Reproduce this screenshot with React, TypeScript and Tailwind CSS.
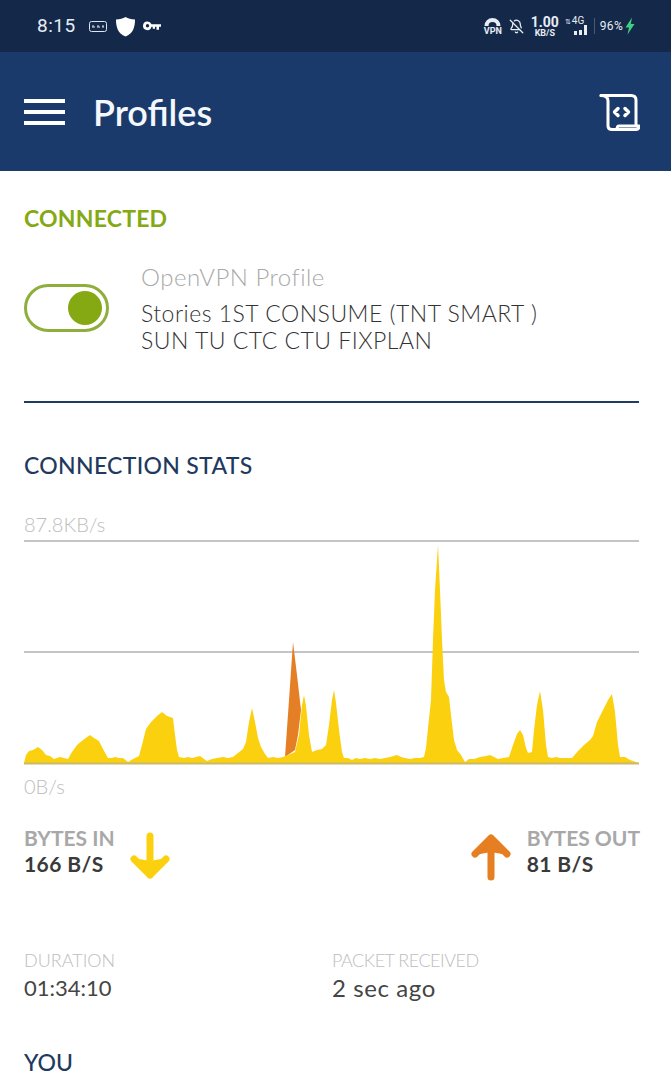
import React from 'react';
import { BellOff } from 'lucide-react';

const yellow =
  '24,763 26,755 29,751 33,750 38,747 42,750 46,755 50,756 54,759 57,758 60,757 64,758 68,759 72,752 77,745 83,740 90,735 94,738 99,741 103,749 108,758 112,758 115,757 119,758 123,758 128,762 133,759 139,756 142,745 146,729 151,722 157,716 162,712 167,716 173,718 175,735 177,750 179,757 184,758 188,757 192,758 196,757 200,756 204,759 207,761 212,759 217,758 223,757 228,758 233,757 238,753 243,749 246,742 249,722 252,708 255,722 258,738 261,747 265,754 268,758 273,757 278,758 283,757 288,755 295,752 299,735 302,705 304,695 306,706 309,735 312,752 317,750 322,749 326,745 329,725 332,700 334,690 336,703 339,730 342,752 344,758 348,758 352,760 356,758 360,759 365,758 370,759 375,758 380,759 385,758 390,757 397,755 401,757 405,758 410,759 415,758 420,758 424,757 426,748 428,728 431,700 433,640 435,590 438,545 440,590 442,640 444,680 446,692 449,697 451,715 454,740 457,750 461,755 465,762 469,759 474,759 480,757 486,756 490,755 494,757 498,759 503,758 509,757 513,745 517,734 520,730 523,735 526,748 528,753 532,752 534,730 537,705 540,691 543,710 546,745 548,757 552,758 556,757 560,758 566,758 572,758 578,751 584,745 590,740 593,736 597,722 603,710 608,700 612,694 615,712 618,745 620,757 625,757 630,760 639,763';

function StatusBar() {
  return (
    <div className="h-[52px] bg-[#14294a] flex items-center justify-between pl-[37px] pr-[36px] text-[#e8edf4]">
      <div className="flex items-center">
        <span className="text-[19px] tracking-[0.5px] font-['Roboto',sans-serif]">8:15</span>
        <svg className="ml-[13px]" width="18" height="11" viewBox="0 0 18 11" fill="none" stroke="#dfe5ee" strokeWidth="1">
          <rect x="0.5" y="0.5" width="17" height="10" rx="2" />
          <path d="M3 6h3M8 6h3M13 6h2M4 4v2M9 4v2M14 4v2" />
        </svg>
        <svg className="ml-[8px]" width="21" height="21" viewBox="0 0 21 21" fill="#fff">
          <path d="M10.5 1C13 2.6 16 3.4 20 3.4c0 8-2 14-9.5 17C3 17.400 1 11.400 1 3.400 5 3.400 8 2.600 10.500 1z" />
        </svg>
        <svg className="ml-[7px]" width="18" height="10" viewBox="0 0 18 10" fill="#fff">
          <path d="M4.500 0.500a4.300 4.300 0 0 1 4 2.700H18v2.600h-2v3h-2.500v-3H12v2H9.700V5.800H8.500a4.300 4.300 0 1 1-4-5.300zm0 2.600a1.700 1.700 0 1 0 0 3.400 1.700 1.700 0 0 0 0-3.400z" fillRule="evenodd" />
        </svg>
      </div>
      <div className="flex items-center font-['Roboto',sans-serif]">
        <div className="flex flex-col items-center w-[18px]">
          <svg width="17" height="9" viewBox="0 0 17 9" fill="#e8edf4">
            <path d="M0.500 9a8 8 0 0 1 16 0h-4a4 4 0 0 0-8 0z" />
          </svg>
          <span className="text-[9px] leading-[9px] font-bold mt-[1px]">VPN</span>
        </div>
        <BellOff className="ml-[7px]" size={15} color="#e8edf4" strokeWidth={2} />
        <div className="ml-[8px] flex flex-col items-center w-[26px]">
          <span className="text-[14px] leading-[14px] font-bold">1.00</span>
          <span className="text-[9px] leading-[9px] font-bold">KB/S</span>
        </div>
        <div className="ml-[7px] relative w-[26px] h-[20px]">
          <span className="absolute left-0 top-0 text-[7px] leading-[12px]">⇅</span>
          <span className="absolute left-[7px] top-0 text-[10px] leading-[10px]">4G</span>
          <div className="absolute left-[9px] bottom-[1px] flex items-end gap-[2px]">
            <div className="w-[3px] h-[4px] bg-[#e8edf4]" />
            <div className="w-[3px] h-[5px] bg-[#e8edf4]" />
            <div className="w-[3px] h-[10px] bg-[#e8edf4]" />
          </div>
        </div>
        <div className="ml-[3px] w-px h-[16px] bg-[#4a5a73]" />
        <span className="ml-[5px] text-[12px] tracking-[0.3px]">96%</span>
        <svg className="ml-[2px]" width="10" height="18" viewBox="0 0 10 17" fill="#3fd07f">
          <path d="M7 0L0.500 10H4L2.500 17 9.500 6.500H5.800z" />
        </svg>
      </div>
    </div>
  );
}

function Header() {
  return (
    <div className="h-[119px] bg-[#1a3a6c] flex items-center pl-[24px] pr-[31px]">
      <div className="w-[41px] flex flex-col gap-[7px]">
        <div className="h-[4px] bg-white" />
        <div className="h-[4px] bg-white" />
        <div className="h-[4px] bg-white" />
      </div>
      <h1 className="ml-[28px] text-[36px] font-semibold text-[#f4f7fb]">Profiles</h1>
      <svg className="ml-auto" width="41" height="40" viewBox="0 0 41 40" fill="none" stroke="#fff" strokeWidth="3" strokeLinejoin="round" strokeLinecap="round">
        <path d="M2 3.500H32Q37 3.500 37 8V33" />
        <path d="M2 3.500Q9 3.500 9 9V34Q9 37.500 13 37.500H37Q40 37.500 40 34H20Q18 34 18 37.500" />
        <path d="M19 16.500l-3.500 3.500 3.500 3.500M26 16.500l3.500 3.500-3.500 3.500" strokeWidth="3.500" />
      </svg>
    </div>
  );
}

function Chart() {
  return (
    <svg className="block" width="671" height="226" viewBox="0 540 671 226">
      <path d="M24 541H639M24 652H639" stroke="#c4c4c4" strokeWidth="2" />
      <polygon points="285,757 289,700 293,642 297,675 301,710 298,735 295,750" fill="#e57f26" />
      <polygon points={yellow} fill="#fbd00e" />
      <path d="M24 763.500H639" stroke="#c9b96a" strokeWidth="2" />
    </svg>
  );
}

function ArrowDown() {
  return (
    <svg width="40" height="49" viewBox="0 0 40 49" fill="none" stroke="#fbd00e" strokeWidth="7" strokeLinecap="round" strokeLinejoin="round">
      <path d="M20 4V43M4 27L20 43 36 27" />
      <path d="M20 30L9 28 20 42 31 28z" fill="#fbd00e" strokeWidth="2" />
    </svg>
  );
}

function ArrowUp() {
  return (
    <svg width="40" height="49" viewBox="0 0 40 49" fill="none" stroke="#e67e22" strokeWidth="7" strokeLinecap="round" strokeLinejoin="round">
      <path d="M20 45V6M4 22L20 6 36 22" />
      <path d="M20 19L9 21 20 7 31 21z" fill="#e67e22" strokeWidth="2" />
    </svg>
  );
}

export default function App() {
  return (
    <div className="w-[671px] h-[1080px] overflow-hidden bg-white font-['Lato',sans-serif]">
      <StatusBar />
      <Header />

      {/* Connected */}
      <div className="pl-[24px] pr-[32px] pt-[33px]">
        <h2 className="text-[23px] leading-[28px] font-bold text-[#84a913] tracking-[0.2px]">CONNECTED</h2>
        <div className="mt-[32px] flex h-[102px]">
          <div className="mt-[20px] w-[85px] h-[48px] rounded-full border-[3px] border-[#8fae3c] flex items-center justify-end pr-[4px]">
            <div className="w-[34px] h-[34px] rounded-full bg-[#84a913]" />
          </div>
          <div className="ml-[32px]">
            <p className="mt-[-1px] text-[24px] leading-[28px] font-light text-[#a9a9a9] tracking-[0.5px]">OpenVPN Profile</p>
            <p className="mt-[9px] text-[23px] leading-[27px] font-light text-[#333333] tracking-[0.5px]">
              Stories 1ST CONSUME (TNT SMART )
              <br />
              SUN TU CTC CTU FIXPLAN
            </p>
          </div>
        </div>
        <div className="mt-[35px] h-[2px] bg-[#1f3d64]" />
      </div>

      {/* Stats */}
      <h2 className="mt-[48px] px-[24px] text-[23px] leading-[28px] font-medium text-[#1f3a60] tracking-[0.3px]">CONNECTION STATS</h2>
      <p className="mt-[32px] px-[24px] text-[20px] leading-[26px] font-light text-[#bdbdbd]">87.8KB/s</p>
      <div className="mt-[3px]">
        <Chart />
      </div>
      <p className="mt-[7px] px-[24px] text-[20px] leading-[26px] font-light text-[#bdbdbd]">0B/s</p>

      <div className="mt-[26px] h-[52px] pl-[24px] pr-[31px] flex justify-between">
        <div className="flex">
          <div className="w-[91px]">
            <p className="text-[21px] leading-[26px] font-bold text-[#a8a8a8] whitespace-nowrap">BYTES IN</p>
            <p className="text-[21px] leading-[26px] font-bold text-[#3a3a3a] tracking-[0.4px]">166 B/S</p>
          </div>
          <div className="ml-[15px] mt-[7px]">
            <ArrowDown />
          </div>
        </div>
        <div className="flex">
          <div className="mr-[16px] mt-[7px]">
            <ArrowUp />
          </div>
          <div>
            <p className="text-[21px] leading-[26px] font-bold text-[#a8a8a8]">BYTES OUT</p>
            <p className="text-[21px] leading-[26px] font-bold text-[#3a3a3a] tracking-[0.4px]">81 B/S</p>
          </div>
        </div>
      </div>

      <div className="mt-[71px] px-[24px] flex">
        <div className="w-[308px]">
          <p className="text-[18px] leading-[24px] font-light text-[#bdbdbd]">DURATION</p>
          <p className="mt-[2px] text-[22px] leading-[28px] text-[#454545]">01:34:10</p>
        </div>
        <div>
          <p className="text-[18px] leading-[24px] font-light text-[#bdbdbd] tracking-[-0.5px]">PACKET RECEIVED</p>
          <p className="mt-[2px] text-[24px] leading-[28px] text-[#454545] tracking-[0.6px]">2 sec ago</p>
        </div>
      </div>

      <h2 className="mt-[46px] px-[24px] text-[23px] leading-[28px] font-medium text-[#1f3a60]">YOU</h2>
    </div>
  );
}
